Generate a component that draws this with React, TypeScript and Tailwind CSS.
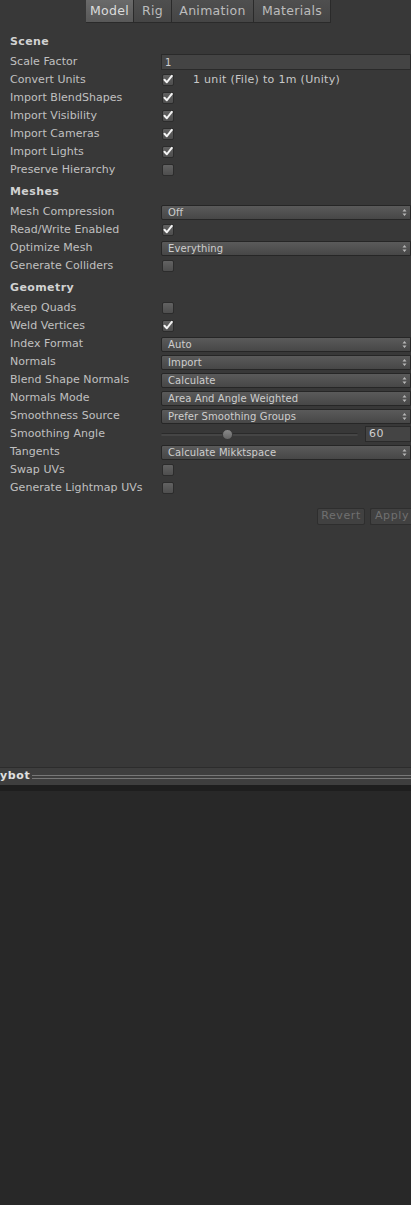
import React from 'react';

const font = "font-['DejaVu_Sans',sans-serif]";

function Label({ children }: { children: React.ReactNode }) {
  return (
    <div className="w-[161px] shrink-0 pl-[10px] text-[11px] tracking-[0.05px] text-[#c0c0c0] whitespace-nowrap">
      {children}
    </div>
  );
}

function Row({ label, children }: { label: string; children?: React.ReactNode }) {
  return (
    <div className="flex h-[18px] items-center">
      <Label>{label}</Label>
      <div className="flex min-w-0 flex-1 items-center">{children}</div>
    </div>
  );
}

function Header({ title }: { title: string }) {
  return (
    <div className="flex h-[24px] items-center pl-[10px] pt-[2px] text-[11px] font-bold tracking-[0.4px] text-[#d2d2d2]">
      {title}
    </div>
  );
}

function Check({ on }: { on?: boolean }) {
  return (
    <div className="ml-[1px] flex h-[12px] w-[12px] items-center justify-center rounded-[2px] border border-[#2c2c2c] bg-gradient-to-b from-[#626262] to-[#4e4e4e]">
      {on && (
        <svg width="12" height="11" viewBox="0 0 12 11" className="mt-[-1px]">
          <path d="M1.8 5.8 L4.6 8.8 L10.6 1.2" fill="none" stroke="#f4f4f4" strokeWidth="2.4" strokeLinejoin="round" strokeLinecap="round" />
        </svg>
      )}
    </div>
  );
}

function Select({ value }: { value: string }) {
  return (
    <div className="flex h-[15px] flex-1 items-center justify-between rounded-l-[2px] border border-[#262626] bg-gradient-to-b from-[#5a5a5a] to-[#474747] pl-[6px] pr-[3px]">
      <span className="text-[10px] tracking-[0.1px] text-[#cecece]">{value}</span>
      <svg width="5" height="9" viewBox="0 0 5 9">
        <path d="M0.5 3.5 L2.5 1 L4.5 3.5 Z M0.5 5.5 L2.5 8 L4.5 5.5 Z" fill="#b8b8b8" />
      </svg>
    </div>
  );
}

const tabs = [
  { name: 'Model', active: true, w: 'w-[48px]' },
  { name: 'Rig', w: 'w-[38px]' },
  { name: 'Animation', w: 'w-[82px]' },
  { name: 'Materials', w: 'w-[77px]' },
];

export default function App() {
  return (
    <div className={`${font} flex h-[1205px] w-[411px] flex-col overflow-hidden bg-[#383838]`}>
      <div className="flex h-[23px] justify-start pl-[86px]">
        {tabs.map((t) => (
          <div
            key={t.name}
            className={`${t.w} flex items-center justify-center border-r border-b border-[#2a2a2a] text-[12.5px] tracking-[0.3px] ${
              t.active
                ? 'bg-gradient-to-b from-[#6a6a6a] to-[#585858] text-[#dcdcdc]'
                : 'bg-gradient-to-b from-[#4f4f4f] to-[#454545] text-[#bcbcbc]'
            }`}
          >
            {t.name}
          </div>
        ))}
      </div>

      <div className="pt-[6px]">
        <Header title="Scene" />
        <Row label="Scale Factor">
          <div className="flex h-[16px] flex-1 items-center border border-[#2a2a2a] bg-[#444444] pl-[3px] text-[10px] text-[#d0d0d0]">1</div>
        </Row>
        <Row label="Convert Units">
          <Check on />
          <span className="ml-[19px] text-[11px] tracking-[0.3px] text-[#c8c8c8]">1 unit (File) to 1m (Unity)</span>
        </Row>
        <Row label="Import BlendShapes"><Check on /></Row>
        <Row label="Import Visibility"><Check on /></Row>
        <Row label="Import Cameras"><Check on /></Row>
        <Row label="Import Lights"><Check on /></Row>
        <Row label="Preserve Hierarchy"><Check /></Row>

        <Header title="Meshes" />
        <Row label="Mesh Compression"><Select value="Off" /></Row>
        <Row label="Read/Write Enabled"><Check on /></Row>
        <Row label="Optimize Mesh"><Select value="Everything" /></Row>
        <Row label="Generate Colliders"><Check /></Row>

        <Header title="Geometry" />
        <Row label="Keep Quads"><Check /></Row>
        <Row label="Weld Vertices"><Check on /></Row>
        <Row label="Index Format"><Select value="Auto" /></Row>
        <Row label="Normals"><Select value="Import" /></Row>
        <Row label="Blend Shape Normals"><Select value="Calculate" /></Row>
        <Row label="Normals Mode"><Select value="Area And Angle Weighted" /></Row>
        <Row label="Smoothness Source"><Select value="Prefer Smoothing Groups" /></Row>
        <Row label="Smoothing Angle">
          <div className="relative flex h-[14px] w-[197px] items-center">
            <div className="h-[3px] w-full rounded-full border-t border-[#2a2a2a] bg-[#454545]" />
            <div className="absolute left-[61px] top-[2px] h-[11px] w-[11px] rounded-full border border-[#3a3a3a] bg-gradient-to-b from-[#8a8a8a] to-[#666666]" />
          </div>
          <div className="ml-[7px] flex h-[16px] flex-1 items-center border border-[#2a2a2a] bg-[#444444] pl-[3px] text-[11px] tracking-[0.4px] text-[#d0d0d0]">60</div>
        </Row>
        <Row label="Tangents"><Select value="Calculate Mikktspace" /></Row>
        <Row label="Swap UVs"><Check /></Row>
        <Row label="Generate Lightmap UVs"><Check /></Row>

        <div className="mt-[11px] flex justify-end gap-[5px]">
          <div className="flex h-[17px] w-[48px] items-center justify-center rounded-[2px] border border-[#2e2e2e] bg-[#414141] text-[11px] tracking-[0.6px] text-[#707070]">Revert</div>
          <div className="flex h-[17px] w-[41px] items-center justify-start rounded-l-[2px] border border-r-0 border-[#2e2e2e] bg-[#414141] pl-[4px] text-[11px] tracking-[0.6px] text-[#707070]">Apply</div>
        </div>
      </div>

      <div className="flex-1" />

      <div className="mt-auto flex h-[18px] items-center border-t border-[#2c2c2c] bg-[#3e3e3e]">
        <span className="text-[11px] font-bold tracking-[0.6px] text-[#e0e0e0]">ybot</span>
        <div className="ml-[2px] flex flex-1 flex-col gap-[2px]">
          <div className="h-[1px] bg-[#777777]" />
          <div className="h-[1px] bg-[#777777]" />
        </div>
      </div>
      <div className="h-[6px] bg-[#1e1e1e]" />
      <div className="h-[414px] bg-[#282828]" />
    </div>
  );
}
